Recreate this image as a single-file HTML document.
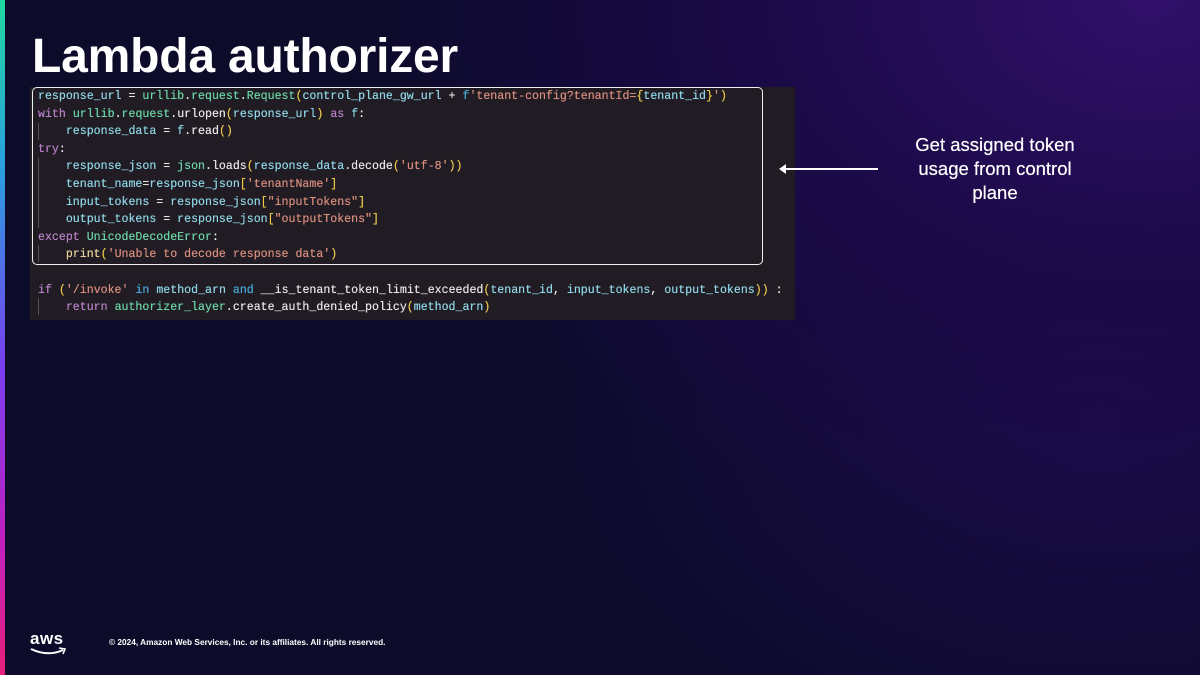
<!DOCTYPE html>
<html><head><meta charset="utf-8"><style>
body{margin:0;width:1200px;height:675px;overflow:hidden;position:relative;font-family:"Liberation Sans",sans-serif;
background:radial-gradient(ellipse 800px 550px at 1150px 0px,#31106a 0%,#1c0a4a 45%,transparent 100%),
radial-gradient(ellipse 600px 400px at 1100px 420px,#1a0c48 0%,transparent 100%),#0c0b2a;}
.strip{position:absolute;left:0;top:0;width:5px;height:675px;background:linear-gradient(#20d8a0,#2a9fe0 25%,#7a3cf0 55%,#c020c0 80%,#e8207a);}
h1{position:absolute;left:32px;top:29px;margin:0;font-size:48px;font-weight:bold;color:#fff;letter-spacing:-0.2px}
.code{position:absolute;left:30px;top:87px;width:765px;height:233px;background:#211c24;}
.hl{position:absolute;left:32px;top:87px;width:729px;height:176px;border:1.5px solid #eee;border-radius:5px;}
pre{position:absolute;left:38px;top:88px;margin:0;font-family:"Liberation Mono",monospace;font-size:11.6px;line-height:17.6px;color:#e8e8e8;text-shadow:0 0 0.4px currentColor;}
.v{color:#8fd6e6}.k{color:#b880c8}.s{color:#d98e7e}.y{color:#e8c84a}.g{color:#6cd6a6}.b{color:#4aa8d8}.p{color:#e6d49a}
.bar{position:absolute;left:38px;width:1px;background:#555;}
.note{position:absolute;left:880px;top:133px;width:230px;text-align:center;color:#fff;font-size:18.5px;line-height:24px;text-shadow:0 0 0.5px #fff;}
.arrow{position:absolute;left:781px;top:168px;width:97px;height:2px;background:#fff;}
.arrow:before{content:"";position:absolute;left:-2px;top:-4px;border:5px solid transparent;border-right:7px solid #fff;border-left:0;}
.aws{position:absolute;left:30px;top:629px;color:#fff;font-size:17px;font-weight:bold;letter-spacing:0.5px}
.copy{position:absolute;left:109px;top:637px;color:#fff;font-size:8.3px;font-weight:bold}
</style></head><body>
<div class="strip"></div>
<h1>Lambda authorizer</h1>
<div class="code"></div>
<div class="hl"></div>
<div class="bar" style="top:123px;height:17px"></div>
<div class="bar" style="top:158px;height:70px"></div>
<div class="bar" style="top:245px;height:17px"></div>
<div class="bar" style="top:298px;height:17px"></div>
<pre><span class="v">response_url</span> = <span class="g">urllib</span>.<span class="g">request</span>.<span class="g">Request</span><span class="y">(</span><span class="v">control_plane_gw_url</span> + <span class="b">f</span><span class="s">'tenant-config?tenantId=</span><span class="y">{</span><span class="v">tenant_id</span><span class="y">}</span><span class="s">'</span><span class="y">)</span>
<span class="k">with</span> <span class="g">urllib</span>.<span class="g">request</span>.urlopen<span class="y">(</span><span class="v">response_url</span><span class="y">)</span> <span class="k">as</span> <span class="v">f</span>:
    <span class="v">response_data</span> = <span class="v">f</span>.read<span class="y">()</span>
<span class="k">try</span>:
    <span class="v">response_json</span> = <span class="g">json</span>.loads<span class="y">(</span><span class="v">response_data</span>.decode<span class="y">(</span><span class="s">'utf-8'</span><span class="y">))</span>
    <span class="v">tenant_name</span>=<span class="v">response_json</span><span class="y">[</span><span class="s">'tenantName'</span><span class="y">]</span>
    <span class="v">input_tokens</span> = <span class="v">response_json</span><span class="y">[</span><span class="s">"inputTokens"</span><span class="y">]</span>
    <span class="v">output_tokens</span> = <span class="v">response_json</span><span class="y">[</span><span class="s">"outputTokens"</span><span class="y">]</span>
<span class="k">except</span> <span class="g">UnicodeDecodeError</span>:
    <span class="p">print</span><span class="y">(</span><span class="s">'Unable to decode response data'</span><span class="y">)</span>

<span class="k">if</span> <span class="y">(</span><span class="s">'/invoke'</span> <span class="b">in</span> <span class="v">method_arn</span> <span class="b">and</span> __is_tenant_token_limit_exceeded<span class="y">(</span><span class="v">tenant_id</span>, <span class="v">input_tokens</span>, <span class="v">output_tokens</span><span class="y">))</span> :
    <span class="k">return</span> <span class="g">authorizer_layer</span>.create_auth_denied_policy<span class="y">(</span><span class="v">method_arn</span><span class="y">)</span></pre>
<div class="arrow"></div>
<div class="note">Get assigned token<br>usage from control<br>plane</div>
<div class="aws">aws<svg style="position:absolute;left:0;top:18px" width="38" height="9" viewBox="0 0 38 9"><path d="M1 2 Q18 10 33 3" stroke="#fff" stroke-width="2" fill="none"/><path d="M29 1 L35 2 L33 7" stroke="#fff" stroke-width="1.6" fill="none"/></svg></div>
<div class="copy">© 2024, Amazon Web Services, Inc. or its affiliates. All rights reserved.</div>
</body></html>
